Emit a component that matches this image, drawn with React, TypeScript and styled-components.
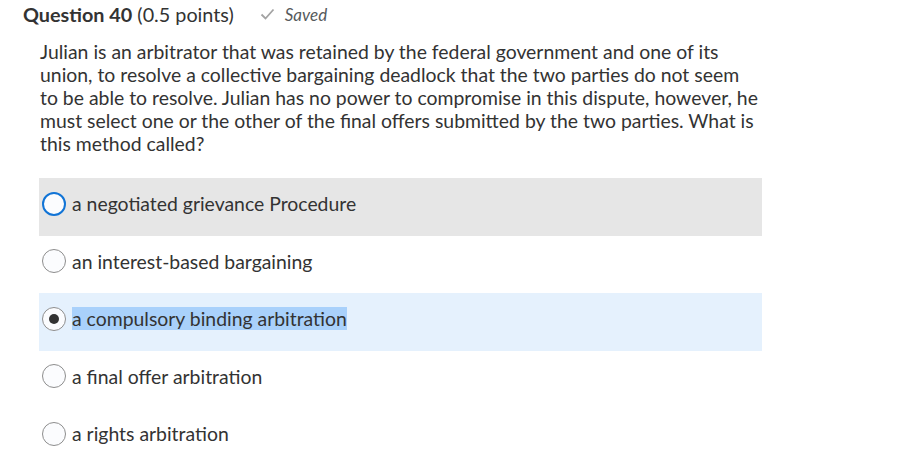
import styled, { createGlobalStyle } from "styled-components";

const GlobalStyle = createGlobalStyle`
  body {
    margin: 0;
    background: #ffffff;
    font-family: Lato, "Open Sans", sans-serif;
    color: #333333;
  }
`;

interface OptionData {
  label: string;
  state: "focused" | "selected" | "plain";
}

const options: OptionData[] = [
  { label: "a negotiated grievance Procedure", state: "focused" },
  { label: "an interest-based bargaining", state: "plain" },
  { label: "a compulsory binding arbitration", state: "selected" },
  { label: "a final offer arbitration", state: "plain" },
  { label: "a rights arbitration", state: "plain" },
];

function App() {
  return (
    <>
      <GlobalStyle />
      <Page>
        <Header>
          <Title>
            <strong>Question 40</strong> (0.5 points)
          </Title>
          <SavedTag>
            <svg width="15" height="12" viewBox="0 0 15 12">
              <path d="M1.5 6.5 L5.5 10.5 L13.5 1.5" fill="none" stroke="#a3a3a3" strokeWidth="1.8" />
            </svg>
            <span>Saved</span>
          </SavedTag>
        </Header>
        <Body>
          <Prompt>
            Julian is an arbitrator that was retained by the federal government and one of its
            union, to resolve a collective bargaining deadlock that the two parties do not seem
            to be able to resolve. Julian has no power to compromise in this dispute, however, he
            must select one or the other of the final offers submitted by the two parties. What is
            this method called?
          </Prompt>
          <OptionList>
            {options.map((o) => (
              <OptionRow key={o.label} state={o.state}>
                <Radio state={o.state}>{o.state === "selected" && <Dot />}</Radio>
                <OptionLabel highlighted={o.state === "selected"}>{o.label}</OptionLabel>
              </OptionRow>
            ))}
          </OptionList>
        </Body>
      </Page>
    </>
  );
}

export default App;

const Page = styled.div`
  width: 897px;
  height: 460px;
  padding: 2px 0 0 23px;
  box-sizing: border-box;
  overflow: hidden;
`;

const Header = styled.div`
  display: flex;
  align-items: center;
  gap: 26px;
  height: 24px;
`;

const Title = styled.div`
  font-size: 19.8px;
  color: #333333;

  strong {
    font-weight: 700;
  }
`;

const SavedTag = styled.div`
  display: flex;
  align-items: center;
  gap: 10px;
  font-size: 17px;
  font-style: italic;
  color: #565a5c;
`;

const Body = styled.div`
  padding-left: 16px;
`;

const Prompt = styled.p`
  margin: 14px 0 0 1px;
  width: 718px;
  font-size: 19.4px;
  line-height: 23px;
  color: #333333;
`;

const OptionList = styled.div`
  margin-top: 23px;
  width: 723px;
  display: flex;
  flex-direction: column;
`;

type RowState = "focused" | "selected" | "plain";

const OptionRow = styled.div<{ state: RowState }>`
  height: 57.5px;
  box-sizing: border-box;
  padding: 0 0 6px 3px;
  display: flex;
  align-items: center;
  gap: 6px;
  background: ${(p) =>
    p.state === "focused" ? "#e6e6e6" : p.state === "selected" ? "#e5f1fd" : "transparent"};
`;

const Radio = styled.span<{ state: RowState }>`
  width: 24px;
  height: 24px;
  box-sizing: border-box;
  border-radius: 50%;
  flex-shrink: 0;
  display: flex;
  align-items: center;
  justify-content: center;
  background: #fbfcfe;
  border: ${(p) => (p.state === "focused" ? "2px solid #1174d6" : "1px solid #8d8d8d")};
`;

const Dot = styled.span`
  width: 10px;
  height: 10px;
  border-radius: 50%;
  background: #333333;
`;

const OptionLabel = styled.span<{ highlighted: boolean }>`
  font-size: 19.4px;
  line-height: 23px;
  color: #333333;
  background: ${(p) => (p.highlighted ? "#a9d1fb" : "transparent")};
`;
